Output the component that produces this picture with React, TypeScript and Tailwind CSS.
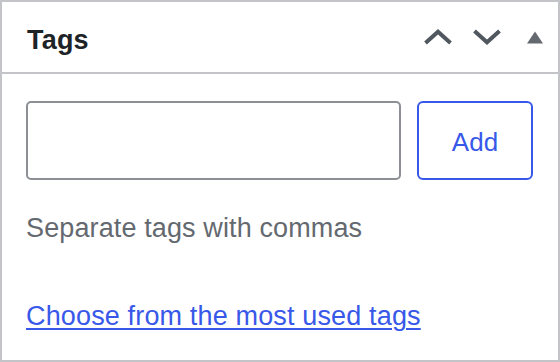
import React from "react";

export default function App() {
  return (
    <div
      className="w-[560px] h-[362px] border-2 border-[#c3c4c7] bg-white flex flex-col overflow-hidden"
      style={{ fontFamily: '"Liberation Sans", Arial, sans-serif' }}
    >
      <div className="h-[72px] shrink-0 border-b-2 border-[#c3c4c7] flex items-center pl-[25px] pr-[15px]">
        <h2 className="pt-[5px] text-[27px] leading-[36px] font-bold text-[#1d2327] tracking-[0.2px]">Tags</h2>
        <div className="ml-auto flex items-center">
          <button className="w-[30px] h-[16px] flex items-center justify-center" aria-label="Move up">
            <svg width="30" height="16" viewBox="0 0 30 16">
              <polyline points="2.5,14 15,2.8 27.5,14" fill="none" stroke="#50575e" strokeWidth="4" />
            </svg>
          </button>
          <button className="ml-[19px] w-[30px] h-[16px] flex items-center justify-center" aria-label="Move down">
            <svg width="30" height="16" viewBox="0 0 30 16">
              <polyline points="2.5,2 15,13.2 27.5,2" fill="none" stroke="#50575e" strokeWidth="4" />
            </svg>
          </button>
          <button className="ml-[25px] w-[16px] h-[14px] flex items-center justify-center" aria-label="Toggle panel">
            <svg width="16" height="13" viewBox="0 0 16 13">
              <polygon points="8,0.5 16,12.5 0,12.5" fill="#646970" />
            </svg>
          </button>
        </div>
      </div>
      <div className="pl-[24px] pt-[27px] flex flex-col">
        <div className="flex gap-[16px]">
          <input
            type="text"
            className="w-[375px] h-[79px] border-2 border-[#8c8f94] rounded-[5px] bg-white outline-none"
          />
          <button className="w-[116px] h-[79px] pt-[3px] border-2 border-[#3858e9] rounded-[6px] text-[26px] text-[#3858e9] bg-white">
            Add
          </button>
        </div>
        <p className="mt-[30px] text-[27px] leading-[36px] text-[#646970] tracking-[0.12px]">Separate tags with commas</p>
        <a
          href="#"
          className="mt-[52px] text-[27px] leading-[36px] text-[#3858e9] underline decoration-2 underline-offset-[3px] self-start tracking-[0.15px]"
        >
          Choose from the most used tags
        </a>
      </div>
    </div>
  );
}
